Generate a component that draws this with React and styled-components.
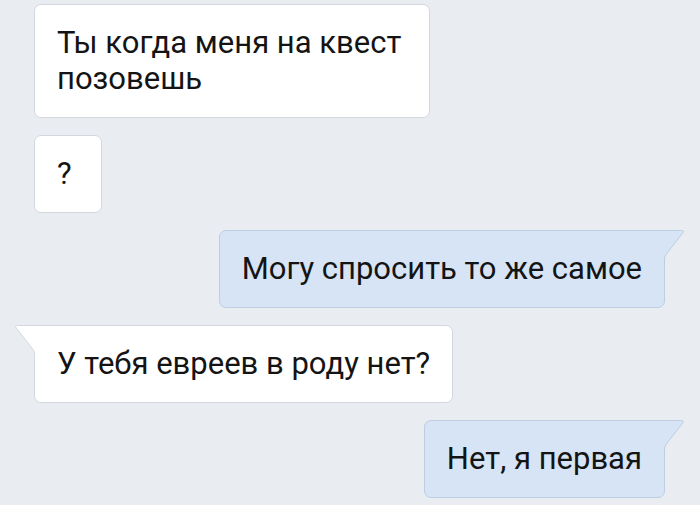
import React from 'react'
import styled, { createGlobalStyle } from 'styled-components'

const GlobalStyle = createGlobalStyle`
  html, body {
    margin: 0;
    padding: 0;
    background: #e9edf1;
  }
  body {
    font-family: Roboto, "Noto Sans", sans-serif;
  }
`

const Chat = styled.div`
  width: 700px;
  height: 505px;
  box-sizing: border-box;
  padding: 4px 35px 0 34px;
  display: flex;
  flex-direction: column;
  gap: 17px;
  overflow: hidden;
`

const Row = styled.div`
  display: flex;
  justify-content: ${props => (props.out ? 'flex-end' : 'flex-start')};
`

const Bubble = styled.div`
  position: relative;
  box-sizing: border-box;
  max-width: ${props => props.wrap || 'none'};
  min-width: 68px;
  padding: 20px 22px 20px 22px;
  font-size: 31px;
  line-height: 36px;
  color: #141414;
  background: ${props => (props.out ? '#d6e4f6' : '#ffffff')};
  border: 1px solid ${props => (props.out ? '#bdcde2' : '#d3d8df')};
  border-radius: 7px;
  ${props => props.tail && (props.out ? 'border-top-right-radius: 0;' : 'border-top-left-radius: 0;')}
`

const Tail = styled.svg`
  position: absolute;
  top: -1px;
  width: 21px;
  height: 29px;
  ${props => (props.out ? 'left: 100%;' : 'right: 100%; transform: scaleX(-1);')}
`

const BubbleTail = ({ out }) => {
  const fill = out ? '#d6e4f6' : '#ffffff'
  const stroke = out ? '#bdcde2' : '#d3d8df'
  return (
    <Tail out={out} viewBox='0 0 21 29'>
      <path
        d='M0 0.5 H17.5 Q20.5 0.5 18.8 2.8 L3 23.2 Q0.5 26 0.5 29 L0 29 Z'
        fill={fill}
      />
      <path
        d='M0 0.5 H17.5 Q20.5 0.5 18.8 2.8 L3 23.2 Q0.5 26 0.5 29'
        fill='none'
        stroke={stroke}
        strokeWidth='1'
      />
    </Tail>
  )
}

const messages = [
  { text: 'Ты когда меня на квест позовешь', wrap: '396px' },
  { text: '?' },
  { text: 'Могу спросить то же самое', out: true, tail: true },
  { text: 'У тебя евреев в роду нет?', tail: true },
  { text: 'Нет, я первая', out: true, tail: true }
]

const App = () => (
  <>
    <GlobalStyle />
    <Chat>
      {messages.map((m, i) => (
        <Row key={i} out={m.out}>
          <Bubble out={m.out} tail={m.tail} wrap={m.wrap}>
            {m.text}
            {m.tail && <BubbleTail out={m.out} />}
          </Bubble>
        </Row>
      ))}
    </Chat>
  </>
)

export default App
